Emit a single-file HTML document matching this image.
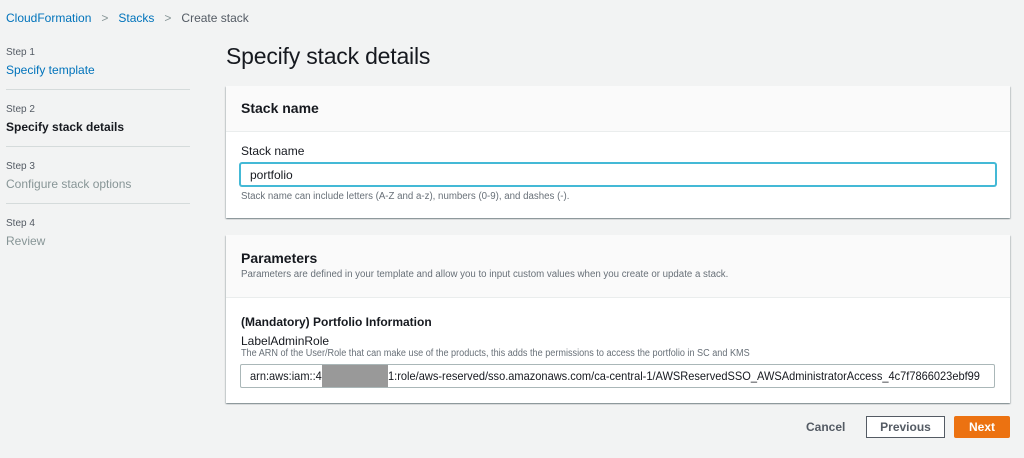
<!DOCTYPE html>
<html><head><style>
body{margin:0;width:1024px;height:458px;background:#f2f3f3;font-family:"Liberation Sans",sans-serif;position:relative;overflow:hidden;color:#16191f}
.a{position:absolute;white-space:nowrap}
.link{color:#0073bb}
.panel{position:absolute;left:226px;width:784px;background:#fff;box-shadow:0 1px 1px rgba(0,28,36,.3),1px 1px 1px rgba(0,28,36,.15),-1px 1px 1px rgba(0,28,36,.15)}
.hd{background:#fafafa;border-bottom:1px solid #eaeded}
.inp{position:absolute;background:#fff;border:1px solid #aab7b8;border-radius:2px;box-sizing:border-box}
.sep{position:absolute;left:6px;width:184px;height:1px;background:#d5dbdb}
</style></head><body>
<div class="a" style="left:6px;top:11px;font-size:12px"><span class="link">CloudFormation</span><span style="color:#879596;margin:0 10px">&gt;</span><span class="link">Stacks</span><span style="color:#879596;margin:0 10px">&gt;</span><span style="color:#545b64">Create stack</span></div>

<div class="a" style="left:6px;top:47px;font-size:10px;color:#545b64">Step 1</div>
<div class="a link" style="left:6px;top:63px;font-size:12px">Specify template</div>
<div class="sep" style="top:89px"></div>
<div class="a" style="left:6px;top:104px;font-size:10px;color:#545b64">Step 2</div>
<div class="a" style="left:6px;top:120px;font-size:12px;font-weight:bold">Specify stack details</div>
<div class="sep" style="top:146px"></div>
<div class="a" style="left:6px;top:161px;font-size:10px;color:#545b64">Step 3</div>
<div class="a" style="left:6px;top:177px;font-size:12px;color:#879596">Configure stack options</div>
<div class="sep" style="top:203px"></div>
<div class="a" style="left:6px;top:218px;font-size:10px;color:#545b64">Step 4</div>
<div class="a" style="left:6px;top:234px;font-size:12px;color:#879596">Review</div>

<div class="a" style="left:226px;top:43px;font-size:23px;letter-spacing:-0.2px">Specify stack details</div>

<div class="panel" style="top:86px;height:132px">
 <div class="hd" style="height:45px"><div class="a" style="left:15px;top:14px;font-size:14px;font-weight:bold">Stack name</div></div>
 <div class="a" style="left:15px;top:58px;font-size:12px">Stack name</div>
 <div class="inp" style="left:14px;top:77px;width:756px;height:23px;border:1px solid #44b9d6;box-shadow:0 0 0 1px #44b9d6"></div>
 <div class="a" style="left:24px;top:82px;font-size:12px">portfolio</div>
 <div class="a" style="left:15px;top:105px;font-size:9.7px;color:#687078">Stack name can include letters (A-Z and a-z), numbers (0-9), and dashes (-).</div>
</div>

<div class="panel" style="top:235px;height:168px">
 <div class="hd" style="height:62px">
  <div class="a" style="left:15px;top:15px;font-size:14px;font-weight:bold">Parameters</div>
  <div class="a" style="left:15px;top:34px;font-size:9.7px;color:#687078">Parameters are defined in your template and allow you to input custom values when you create or update a stack.</div>
 </div>
 <div class="a" style="left:15px;top:80px;font-size:12px;font-weight:bold">(Mandatory) Portfolio Information</div>
 <div class="a" style="left:15px;top:99px;font-size:12px">LabelAdminRole</div>
 <div class="a" style="left:15px;top:113px;font-size:9.7px;color:#687078;transform:scaleX(.94);transform-origin:left">The ARN of the User/Role that can make use of the products, this adds the permissions to access the portfolio in SC and KMS</div>
 <div class="inp" style="left:14px;top:129px;width:755px;height:24px"></div>
 <div style="position:absolute;left:96px;top:130px;width:66px;height:22px;background:#999"></div>
 <div class="a" style="left:24px;top:134px;font-size:12px;transform:scaleX(.92);transform-origin:left">arn:aws:iam::4<span style="display:inline-block;width:72px"></span>1:role/aws-reserved/sso.amazonaws.com/ca-central-1/AWSReservedSSO_AWSAdministratorAccess_4c7f7866023ebf99</div>
</div>

<div class="a" style="left:806px;top:420px;font-size:12px;font-weight:bold;color:#545b64">Cancel</div>
<div class="a" style="left:866px;top:416px;width:79px;height:22px;border:1px solid #545b64;box-sizing:border-box;background:#fff;font-size:12px;font-weight:bold;color:#545b64;text-align:center;line-height:20px">Previous</div>
<div class="a" style="left:954px;top:416px;width:56px;height:22px;background:#ec7211;border-radius:2px;font-size:12px;font-weight:bold;color:#fff;text-align:center;line-height:22px">Next</div>
</body></html>
